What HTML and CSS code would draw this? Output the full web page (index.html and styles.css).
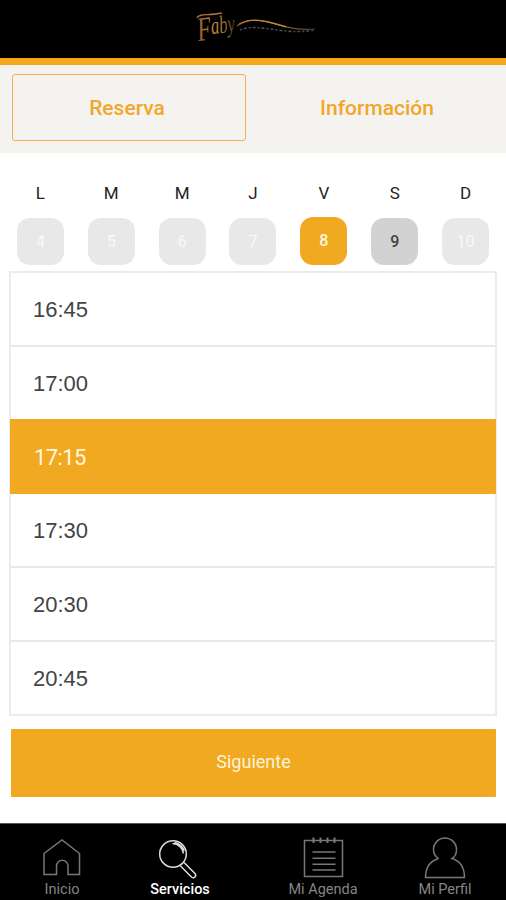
FILE: index.html
```html
<!DOCTYPE html>
<html lang="es">
<head>
    <meta charset="UTF-8">
    <meta name="viewport" content="width=device-width, initial-scale=1.0">
    <title>Reserva</title>

    <link rel="stylesheet" href="styles.css">
</head>
<body>

<header class="header">
    <svg class="logo" width="126" height="40" viewBox="0 0 126 40">
        <defs>
            <linearGradient id="oro" x1="0" y1="0" x2="1" y2="0">
                <stop offset="0" stop-color="#8a5a2c"/>
                <stop offset="0.5" stop-color="#c58a3e"/>
                <stop offset="1" stop-color="#4a3a26"/>
            </linearGradient>
        </defs>
        <path d="M3 9 C4 4 15 7 28 4" fill="none" stroke="#b0763a" stroke-width="1.3"/>
        <text class="logo-text" x="4" y="27" textLength="38" lengthAdjust="spacingAndGlyphs" transform="rotate(-7 4 27)"><tspan class="inicial" dy="5">F</tspan><tspan dy="-5">aby</tspan></text>
        <path d="M43 17 C58 6 76 13 93 18 C100 20 110 21 121 20" fill="none" stroke="url(#oro)" stroke-width="1.2"/>
        <path d="M45 15 C59 7 76 14 92 18" fill="none" stroke="#c98f3c" stroke-width="0.9"/>
        <path d="M46 21 C66 13 86 27 121 21" fill="none" stroke="#4b4d52" stroke-width="1.6" stroke-dasharray="2 2 3 2"/>
    </svg>
</header>

<nav class="tabs">
    <a class="tab active">Reserva</a>
    <a class="tab">Información</a>
</nav>

<div class="dias">
    <div class="dia"><span>L</span><b>4</b></div>
    <div class="dia"><span>M</span><b>5</b></div>
    <div class="dia"><span>M</span><b>6</b></div>
    <div class="dia"><span>J</span><b>7</b></div>
    <div class="dia seleccionado"><span>V</span><b>8</b></div>
    <div class="dia disponible"><span>S</span><b>9</b></div>
    <div class="dia"><span>D</span><b>10</b></div>
</div>

<ul class="horas">
    <li>16:45</li>
    <li>17:00</li>
    <li class="seleccionada">17:15</li>
    <li>17:30</li>
    <li>20:30</li>
    <li>20:45</li>
</ul>

<button class="siguiente">Siguiente</button>

<footer class="menu">
    <a class="item">
        <svg width="44" height="44" viewBox="0 0 44 44">
            <path d="M4 16.500 L22 3 L39.500 16.500 V37.500 H28 V29 A5.500 5.500 0 0 0 16.500 29 V37.500 H4 Z"/>
        </svg>
        <span>Inicio</span>
    </a>
    <a class="item activo">
        <svg width="44" height="44" viewBox="0 0 44 44">
            <circle cx="15" cy="17" r="13.300"/>
            <path d="M22.500 29 L33.500 40 Q35.500 41.500 37 40 Q38.500 38.500 37 36.500 L26 25.500"/>
            <path d="M14.500 6.500 C20 6.500 25 11 25.300 16.500 M16.500 5.500 C21 6 25.500 10 26 14" stroke-width="1.500"/>
        </svg>
        <span>Servicios</span>
    </a>
    <a class="item">
        <svg width="44" height="44" viewBox="0 0 44 44">
            <path d="M3.500 3.500 H41.500 V39.500 H3.500 Z M11.500 15 H34.500 M11.500 21.300 H34.500 M11.500 27.200 H34.500 M11.500 33 H34.500"/>
            <path d="M12.500 0.500 V6 M19.500 0.500 V6 M26.500 0.500 V6 M33.500 0.500 V6" stroke-width="2"/>
        </svg>
        <span>Mi Agenda</span>
    </a>
    <a class="item">
        <svg width="44" height="44" viewBox="0 0 44 44">
            <path d="M15.500 21.500 C11 19 10.500 15 10.500 12.500 A11.500 11.500 0 0 1 33.500 12.500 C33.500 15 32.500 19.500 29 21.500 C37 24 41.500 29.500 41.500 40.500 H2.500 C2.500 29.500 7.500 24 15.500 21.500"/>
        </svg>
        <span>Mi Perfil</span>
    </a>
</footer>

</body>
</html>
```
FILE: styles.css
```css
body {
    font-family: Roboto, Arial, sans-serif;
    margin: 0;
    height: 900px;
    background-color: #ffffff;
    display: flex;
    flex-direction: column;
    overflow: hidden;
}

.header {
    box-sizing: border-box;
    height: 65px;
    padding: 9px 0 0 194px;
    background-color: #000000;
    border-bottom: 7px solid #f4a71b;
}

.logo {
    display: block;
}

.logo-text {
    font-family: "Liberation Serif", serif;
    font-style: italic;
    font-size: 25px;
    fill: url(#oro);
}

.logo-text .inicial {
    font-size: 34px;
}

/* Pestañas */
.tabs {
    box-sizing: border-box;
    height: 88px;
    padding: 9px 12px 12px;
    display: flex;
    gap: 14px;
    background-color: #f5f3ef;
}

.tab {
    box-sizing: border-box;
    width: 234px;
    border: 1.5px solid transparent;
    border-radius: 3px;
    display: flex;
    align-items: center;
    justify-content: center;
    color: #f2a62a;
    font-size: 21px;
    font-weight: 500;
}

.tab.active {
    border-color: #f4b04a;
    padding-right: 4px;
}

/* Dias de la semana */
.dias {
    display: grid;
    grid-template-columns: repeat(7, 1fr);
    height: 118px;
    padding: 0 5px;
}

.dia {
    display: flex;
    flex-direction: column;
    align-items: center;
    padding-top: 30px;
    font-size: 17px;
}

.dia span {
    height: 35px;
    line-height: 20px;
    color: #222222;
}

.dia b {
    width: 47px;
    height: 47px;
    line-height: 48px;
    border-radius: 13px;
    text-align: center;
    font-size: 16px;
    font-weight: 400;
    background-color: #e8e8e8;
    color: #f8f8f8;
}

.dia.seleccionado span {
    height: 34px;
}

.dia.seleccionado b {
    height: 48px;
    background-color: #f2a922;
    color: #fff6e0;
    font-weight: 500;
}

.dia.disponible b {
    background-color: #d2d2d2;
    color: #444444;
    font-weight: 500;
}

/* Lista de horas */
.horas {
    list-style: none;
    box-sizing: border-box;
    height: 445px;
    margin: 0 9px;
    padding: 0;
    border: 2px solid #ebebeb;
    display: flex;
    flex-direction: column;
}

.horas li {
    box-sizing: border-box;
    height: 74px;
    padding-left: 22px;
    border-bottom: 2px solid #e8e8e8;
    line-height: 74px;
    font-family: "Liberation Sans", Arial, sans-serif;
    font-size: 22px;
    color: #444444;
}

.horas li:last-child {
    height: 71px;
    border-bottom: none;
}

.horas li.seleccionada {
    margin: -2px -1px 0;
    height: 75px;
    padding-left: 24px;
    border-color: #f2a922;
    background-color: #f2a922;
    color: #fff6e0;
    font-family: Roboto, Arial, sans-serif;
    line-height: 78px;
    letter-spacing: -0.6px;
}

.siguiente {
    height: 68px;
    margin: 13px 10px 26px 11px;
    padding: 0 0 4px;
    border: none;
    border-radius: 1px;
    background-color: #f2a922;
    color: #fff3d9;
    font-family: Roboto, Arial, sans-serif;
    font-size: 18px;
}

/* Menu inferior */
.menu {
    flex: 1;
    display: grid;
    grid-template-columns: 124px 112px 174px 70px;
    border-top: 1px solid #555555;
    background-color: #000000;
}

.item {
    display: flex;
    flex-direction: column;
    align-items: center;
    padding-top: 13px;
    color: #858585;
    font-size: 14.5px;
    white-space: nowrap;
}

.item svg {
    flex: none;
    fill: none;
    stroke: #777777;
    stroke-width: 1.5;
}

.item span {
    line-height: 18px;
}

.item.activo {
    color: #ffffff;
    font-weight: 500;
}

.item.activo svg {
    stroke: #dddddd;
}
```
